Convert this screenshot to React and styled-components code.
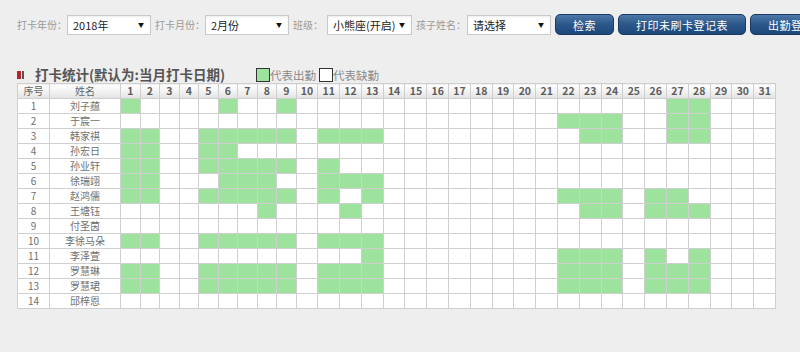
import React from 'react';
import styled, { createGlobalStyle } from 'styled-components';

const GlobalStyle = createGlobalStyle`
  html, body {
    margin: 0;
    background: #eeeeee;
    font-family: "Noto Sans CJK SC", "Liberation Sans", sans-serif;
  }
`

const Page = styled.div`
  width: 800px;
  height: 352px;
  overflow: hidden;
  padding: 14px 0 0 17px;
  box-sizing: border-box;
`

const Toolbar = styled.div`
  display: flex;
  flex-direction: row;
  align-items: center;
  gap: 4px;
  white-space: nowrap;
`

const Field = styled.div`
  display: flex;
  align-items: center;
  gap: ${props => props.$gap || 0}px;
`

const Label = styled.span`
  font-size: 10px;
  color: #9a9a9a;
`

const SelectBox = styled.div`
  display: flex;
  align-items: center;
  width: ${props => props.$w || 84}px;
  height: 20px;
  box-sizing: border-box;
  border: 1px solid #c9c9c9;
  background: #fff;
  box-shadow: inset 0 1px 2px rgba(0, 0, 0, 0.08);

  select {
    appearance: none;
    border: none;
    outline: none;
    background: transparent;
    flex: 1;
    min-width: 0;
    padding: 0 0 0 5px;
    font-family: inherit;
    font-size: 11px;
    color: #222;
  }

  span {
    font-size: 6px;
    color: #111;
    padding-right: 6px;
  }
`

const Button = styled.button`
  height: 21px;
  padding: 0 17px;
  margin-left: ${props => props.$gap || 0}px;
  border: 1px solid #1b3b62;
  border-radius: 5px;
  background: linear-gradient(to bottom, #4c78a8 0%, #2b578a 50%, #1c477b 100%);
  color: #fff;
  font-family: inherit;
  font-size: 11px;
  letter-spacing: 0.5px;
  flex-shrink: 0;
`

const TitleRow = styled.div`
  display: flex;
  align-items: center;
  margin-top: 29px;
  height: 19px;
`

const Marker = styled.span`
  display: flex;
  gap: 1px;
  margin-top: 3px;
  margin-right: 11px;

  i {
    display: block;
    width: 4px;
    height: 8px;
    background: #b8232b;
  }
  b {
    display: block;
    width: 2px;
    height: 8px;
    background: #555;
  }
`

const Title = styled.h3`
  margin: 0;
  font-size: 13.5px;
  font-weight: bold;
  color: #555;
`

const Legend = styled.div`
  display: flex;
  align-items: center;
  margin-left: 31px;
  margin-top: 2px;
  font-size: 11.5px;
  color: #8a8a8a;
`

const Swatch = styled.span`
  display: inline-block;
  width: 12px;
  height: 12px;
  border: 1px solid #333;
  background: ${props => (props.$on ? '#9de29d' : '#fff')};
  margin-left: ${props => props.$gap || 0}px;
`

const Table = styled.table`
  width: 759px;
  table-layout: fixed;
  border-collapse: collapse;
  background: #fff;
  border: 1px solid #c4c4c4;

  th, td {
    border: 1px solid #cfcfcf;
    padding: 0;
    height: 14px;
    line-height: 14px;
    text-align: center;
    font-size: 10px;
    color: #707070;
    overflow: hidden;
    white-space: nowrap;
  }

  th {
    background: linear-gradient(to bottom, #ffffff 0%, #f1f1f1 55%, #e2e2e2 100%);
    color: #666;
    font-weight: normal;
  }
`

const DayHead = styled.th`
  && {
    font-weight: bold;
    font-size: 10.5px;
    color: #5e5e5e;
  }
`

const DayCell = styled.td`
  && {
    background: ${props => (props.$on ? '#9de29d' : '#fff')};
  }
`

const Col = styled.col`
  width: ${props => props.$w}px;
`

const students = [
  { name: '刘子蕴', days: [1, 6, 9, 27, 28] },
  { name: '于宸一', days: [22, 23, 24, 27, 28] },
  { name: '韩家祺', days: [1, 2, 5, 6, 7, 8, 9, 11, 12, 13, 23, 24, 27, 28] },
  { name: '孙宏日', days: [1, 2, 5, 6] },
  { name: '孙业轩', days: [1, 2, 5, 6, 7, 8, 9, 11] },
  { name: '徐瑞翊', days: [1, 2, 6, 7, 8, 11, 12, 13] },
  { name: '赵鸿儒', days: [1, 2, 5, 6, 7, 8, 9, 11, 13, 22, 23, 24, 26, 27] },
  { name: '王塘钰', days: [8, 12, 23, 24, 26, 27, 28] },
  { name: '付圣茵', days: [] },
  { name: '李徐马朵', days: [1, 2, 5, 6, 7, 8, 9, 11, 12, 13] },
  { name: '李泽萱', days: [13, 22, 23, 24, 26, 28] },
  { name: '罗慧琳', days: [1, 2, 5, 6, 7, 8, 9, 11, 12, 13, 22, 23, 24, 26, 27, 28] },
  { name: '罗慧珺', days: [1, 2, 5, 6, 7, 8, 9, 11, 12, 13, 22, 23, 24, 26, 27, 28] },
  { name: '邱梓恩', days: [] },
]

const days = Array.from({ length: 31 }, (_, i) => i + 1)

const Select = ({ value, w }) => (
  <SelectBox $w={w}>
    <select defaultValue={value}>
      <option>{value}</option>
    </select>
    <span>▼</span>
  </SelectBox>
)

const App = () => {
  return (
    <Page>
      <GlobalStyle />
      <Toolbar>
        <Field><Label>打卡年份：</Label><Select value="2018年" /></Field>
        <Field><Label>打卡月份：</Label><Select value="2月份" /></Field>
        <Field $gap={4}><Label>班级：</Label><Select value="小熊座(开启)" w={85} /></Field>
        <Field $gap={1}><Label>孩子姓名：</Label><Select value="请选择" /></Field>
        <Button>检索</Button>
        <Button>打印未刷卡登记表</Button>
        <Button>出勤登记统计</Button>
      </Toolbar>

      <TitleRow>
        <Marker><i /><b /></Marker>
        <Title>打卡统计(默认为:当月打卡日期)</Title>
        <Legend>
          <Swatch $on />代表出勤
          <Swatch $gap={3} />代表缺勤
        </Legend>
      </TitleRow>

      <Table>
        <colgroup>
          <Col $w={32} />
          <Col $w={71} />
          {days.map(d => <Col key={d} $w={d < 10 ? 19.5 : 21.8} />)}
        </colgroup>
        <thead>
          <tr>
            <th>序号</th>
            <th>姓名</th>
            {days.map(d => <DayHead key={d}>{d}</DayHead>)}
          </tr>
        </thead>
        <tbody>
          {students.map((s, i) => (
            <tr key={s.name}>
              <td>{i + 1}</td>
              <td>{s.name}</td>
              {days.map(d => <DayCell key={d} $on={s.days.includes(d)} />)}
            </tr>
          ))}
        </tbody>
      </Table>
    </Page>
  );
}

export default App;
